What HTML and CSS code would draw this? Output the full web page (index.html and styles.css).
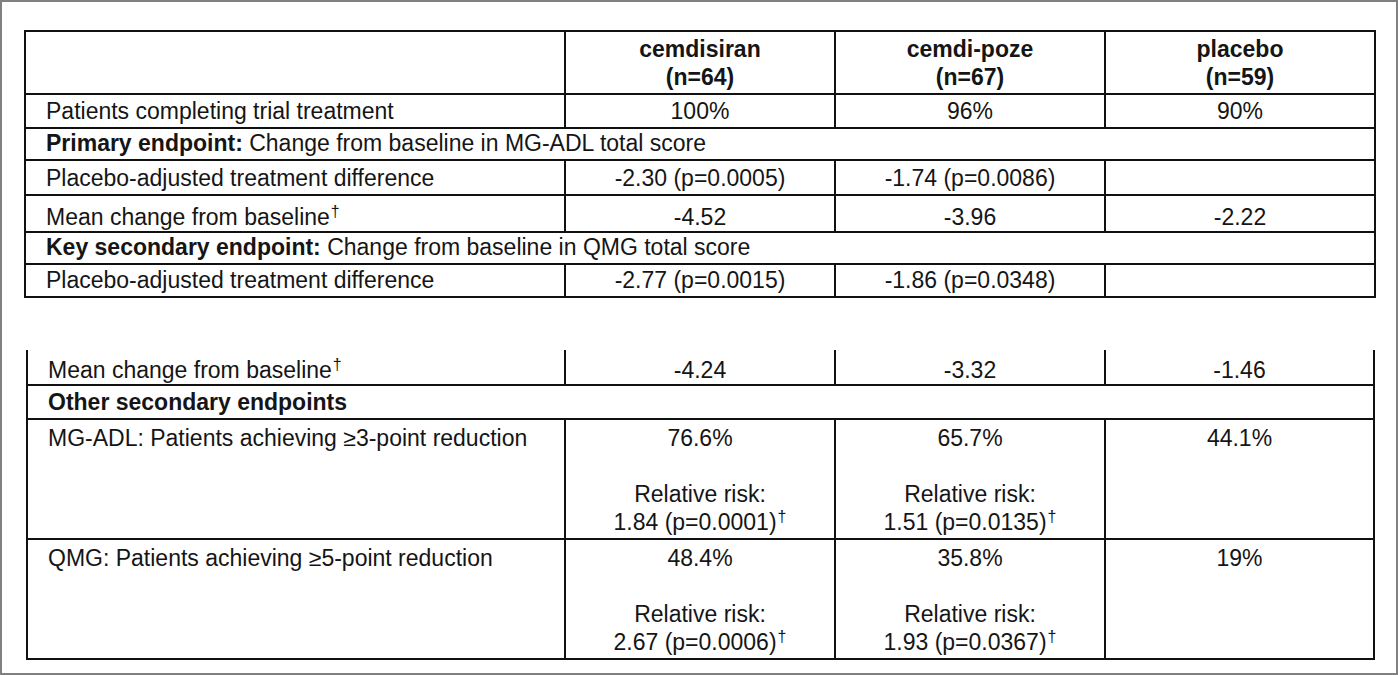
FILE: index.html
```html
<!DOCTYPE html>
<html lang="en">
<head>
<meta charset="utf-8">
<title>Trial results</title>
<link rel="stylesheet" href="styles.css">
</head>
<body>
<main class="page">
  <table class="data first">
    <colgroup>
      <col class="c-label"><col class="c-val"><col class="c-val"><col class="c-last">
    </colgroup>
    <tr class="head">
      <td class="label"></td>
      <td>cemdisiran<br>(n=64)</td>
      <td>cemdi-poze<br>(n=67)</td>
      <td>placebo<br>(n=59)</td>
    </tr>
    <tr class="h34">
      <td class="label">Patients completing trial treatment</td>
      <td>100%</td><td>96%</td><td>90%</td>
    </tr>
    <tr class="h32">
      <td class="label span" colspan="4"><b>Primary endpoint:</b> Change from baseline in MG-ADL total score</td>
    </tr>
    <tr class="h35">
      <td class="label">Placebo-adjusted treatment difference</td>
      <td>-2.30 (p=0.0005)</td><td>-1.74 (p=0.0086)</td><td></td>
    </tr>
    <tr class="h37 tight">
      <td class="label">Mean change from baseline<sup class="dag">†</sup></td>
      <td>-4.52</td><td>-3.96</td><td>-2.22</td>
    </tr>
    <tr class="h32">
      <td class="label span" colspan="4"><b>Key secondary endpoint:</b> Change from baseline in QMG total score</td>
    </tr>
    <tr class="h33">
      <td class="label">Placebo-adjusted treatment difference</td>
      <td>-2.77 (p=0.0015)</td><td>-1.86 (p=0.0348)</td><td></td>
    </tr>
  </table>

  <table class="data second">
    <colgroup>
      <col class="c-label2"><col class="c-val"><col class="c-val"><col class="c-last2">
    </colgroup>
    <tr class="h35 tight cont">
      <td class="label">Mean change from baseline<sup class="dag">†</sup></td>
      <td>-4.24</td><td>-3.32</td><td>-1.46</td>
    </tr>
    <tr class="h34">
      <td class="label span" colspan="4"><b>Other secondary endpoints</b></td>
    </tr>
    <tr class="tall">
      <td class="label">MG-ADL: Patients achieving ≥3-point reduction</td>
      <td>76.6%<br><br>Relative risk:<br>1.84 (p=0.0001)<sup class="dag">†</sup></td>
      <td>65.7%<br><br>Relative risk:<br>1.51 (p=0.0135)<sup class="dag">†</sup></td>
      <td>44.1%</td>
    </tr>
    <tr class="tall">
      <td class="label">QMG: Patients achieving ≥5-point reduction</td>
      <td>48.4%<br><br>Relative risk:<br>2.67 (p=0.0006)<sup class="dag">†</sup></td>
      <td>35.8%<br><br>Relative risk:<br>1.93 (p=0.0367)<sup class="dag">†</sup></td>
      <td>19%</td>
    </tr>
  </table>
</main>
</body>
</html>
```

FILE: styles.css
```css
* { box-sizing: border-box; }

html, body {
  margin: 0;
  padding: 0;
}

body {
  width: 1398px;
  height: 675px;
  overflow: hidden;
  background: #ffffff;
  border: 2px solid #808080;
  font-family: "Liberation Sans", Arial, sans-serif;
  font-size: 23px;
  color: #151515;
}

.page {
  padding: 28px 0 0 22px;
}

.data {
  border-collapse: collapse;
  table-layout: fixed;
  width: 1350px;
}

.c-label { width: 540px; }
.c-val { width: 270px; }
.c-last { width: 270px; }
.c-label2 { width: 538px; }
.c-last2 { width: 269px; }

.data td {
  border: 2px solid #111111;
  padding: 0 4px 2px;
  line-height: 27px;
  text-align: center;
  vertical-align: bottom;
  white-space: nowrap;
}

.data td.label {
  text-align: left;
  padding-left: 20px;
}

.data b {
  font-weight: 700;
}

.head td {
  height: 61px;
  vertical-align: top;
  padding-top: 3px;
  line-height: 28px;
  font-weight: 700;
}

.h32 td { height: 32px; }
.h33 td { height: 33px; }
.h34 td { height: 34px; }
.h35 td { height: 35px; }
.h37 td { height: 37px; }

.tight td { padding-bottom: 0; }

.dag {
  font-size: 16px;
  line-height: 0;
  vertical-align: 8px;
  margin-left: 1px;
}

.second {
  margin-top: 52px;
  margin-left: 2px;
  width: 1347px;
}

.cont td {
  border-top: none;
}

.tall td {
  height: 120px;
  vertical-align: top;
  padding-top: 4px;
  line-height: 28px;
}
```
